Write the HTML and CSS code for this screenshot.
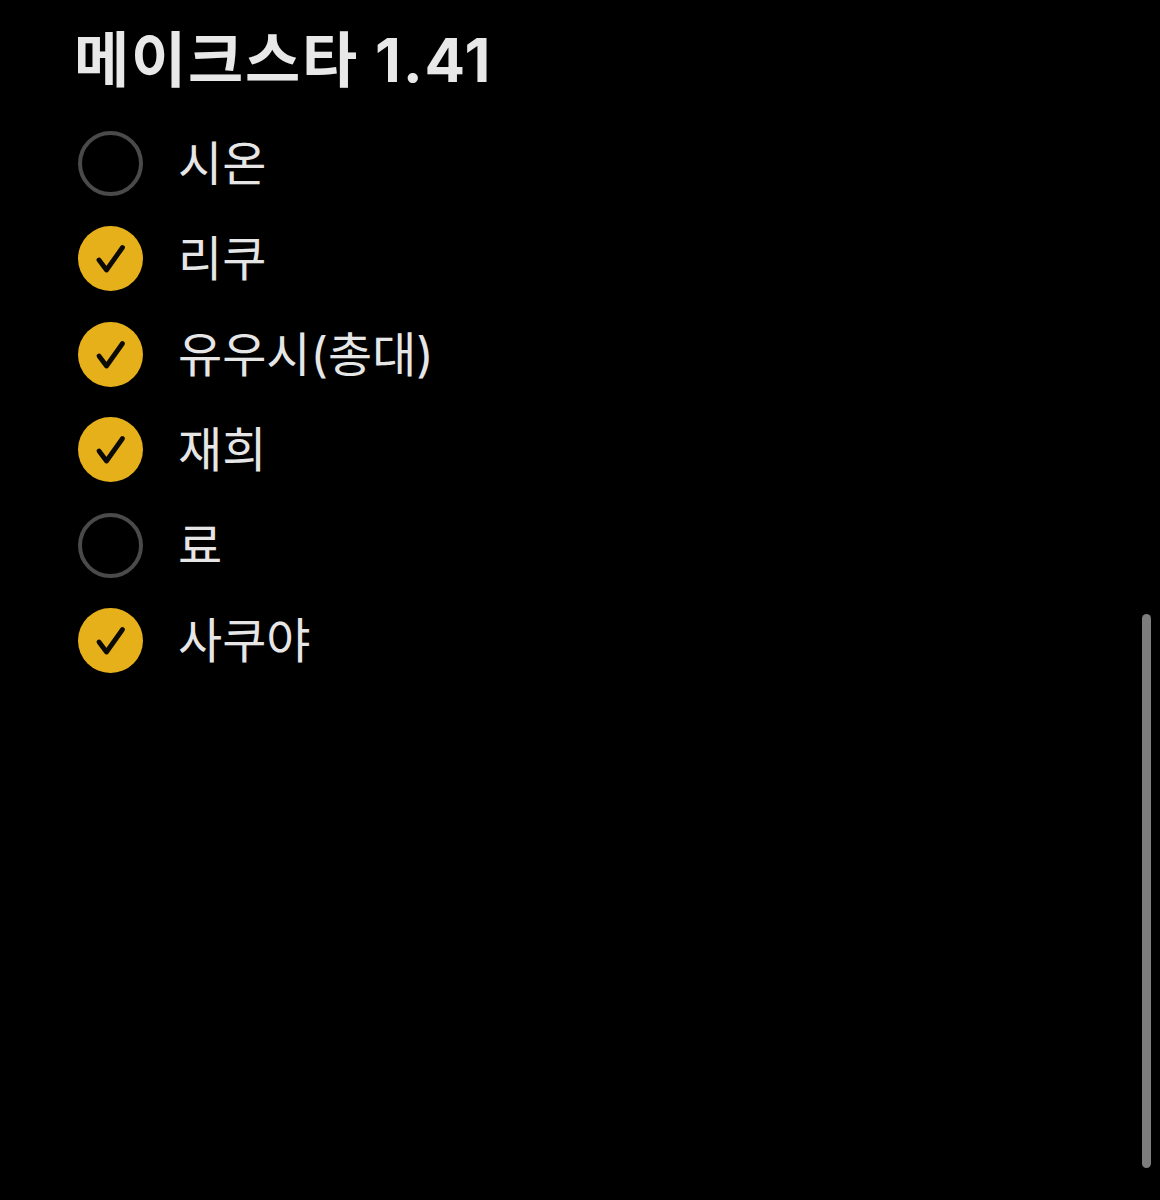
FILE: index.html
```html
<!DOCTYPE html>
<html lang="ko">
<head>
    <meta charset="UTF-8">
    <title>메이크스타 1.41</title>
    <link rel="stylesheet" href="styles.css">
</head>
<body>
    <div class="poll">
        <h1>메이크스타 1.41</h1>
        <ul class="options">
            <li class="option"><span class="radio"></span><span class="label">시온</span></li>
            <li class="option">
                <span class="radio checked"><svg viewBox="0 0 65 65"><path d="M21 34 L28.5 44 L44.5 21.5"/></svg></span>
                <span class="label">리쿠</span>
            </li>
            <li class="option">
                <span class="radio checked"><svg viewBox="0 0 65 65"><path d="M21 34 L28.5 44 L44.5 21.5"/></svg></span>
                <span class="label">유우시(총대)</span>
            </li>
            <li class="option">
                <span class="radio checked"><svg viewBox="0 0 65 65"><path d="M21 34 L28.5 44 L44.5 21.5"/></svg></span>
                <span class="label">재희</span>
            </li>
            <li class="option"><span class="radio"></span><span class="label">료</span></li>
            <li class="option">
                <span class="radio checked"><svg viewBox="0 0 65 65"><path d="M21 34 L28.5 44 L44.5 21.5"/></svg></span>
                <span class="label">사쿠야</span>
            </li>
        </ul>
    </div>
    <div class="scrollbar"></div>
</body>
</html>
```

FILE: styles.css
```css
*{
    margin: 0;
    padding: 0;
    box-sizing: border-box;
}

html, body{
    height: 100%;
}

body{
    background-color: #000;
    color: #e6e6e6;
    font-family: Inter, "Noto Sans CJK KR", sans-serif;
    overflow: hidden;
}

.poll{
    padding: 18px 0 0 74px;
}

h1{
    font-size: 60px;
    font-weight: 700;
    line-height: 84px;
    letter-spacing: 1.8px;
    color: #e8e8e8;
}

.options{
    list-style: none;
    margin-top: 29px;
    display: flex;
    flex-direction: column;
    gap: 30.4px;
}

.option{
    display: flex;
    align-items: center;
    gap: 35px;
    height: 65px;
    padding-left: 4px;
    font-size: 48px;
    font-weight: 400;
    line-height: 65px;
}

.radio{
    width: 65px;
    height: 65px;
    flex-shrink: 0;
    border: 4px solid #4a4a4a;
    border-radius: 50%;
}

.radio.checked{
    border: none;
    background-color: #e6b01a;
}

.radio svg{
    display: block;
    width: 65px;
    height: 65px;
}

.radio path{
    fill: none;
    stroke: #0c0a04;
    stroke-width: 4.8;
    stroke-linecap: round;
    stroke-linejoin: round;
}

.scrollbar{
    position: absolute;
    left: 1142px;
    top: 614px;
    width: 9px;
    height: 554px;
    background-color: #7d7d7d;
    border-radius: 5px;
}
```
